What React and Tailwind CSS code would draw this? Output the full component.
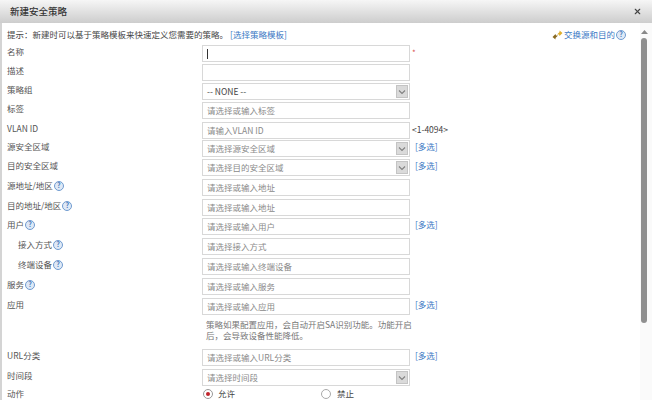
import React from 'react';
import { X } from 'lucide-react';

const rows = [
    { label: '名称', height: 'h-[19px]', required: true, cursor: true },
    { label: '描述', height: 'h-[19px]' },
    { label: '策略组', height: 'h-[19px]', select: true, value: '-- NONE --' },
    { label: '标签', height: 'h-[20px]', placeholder: '请选择或输入标签' },
    { label: 'VLAN ID', height: 'h-[18px]', placeholder: '请输入VLAN ID', range: '<1-4094>' },
    { label: '源安全区域', height: 'h-[19px]', select: true, placeholder: '请选择源安全区域', multi: true },
    { label: '目的安全区域', height: 'h-[20px]', select: true, placeholder: '请选择目的安全区域', multi: true },
    { label: '源地址/地区', height: 'h-[20px]', placeholder: '请选择或输入地址', help: true },
    { label: '目的地址/地区', height: 'h-[19px]', placeholder: '请选择或输入地址', help: true },
    { label: '用户', height: 'h-[20px]', placeholder: '请选择或输入用户', help: true, multi: true },
    { label: '接入方式', height: 'h-[20px]', placeholder: '请选择接入方式', help: true, indent: true },
    { label: '终端设备', height: 'h-[20px]', placeholder: '请选择或输入终端设备', help: true, indent: true },
    { label: '服务', height: 'h-[20px]', placeholder: '请选择或输入服务', help: true },
    { label: '应用', height: 'h-[51px]', placeholder: '请选择或输入应用', multi: true, note: true },
    { label: 'URL分类', height: 'h-[20px]', placeholder: '请选择或输入URL分类', multi: true },
    { label: '时间段', height: 'h-[18px]', select: true, placeholder: '请选择时间段' },
];

const hintText = '提示\uFF1A新建时可以基于策略模板来快速定义您需要的策略。';
const noteText = '策略如果配置应用\uFF0C会自动开启SA识别功能。功能开启后\uFF0C会导致设备性能降低。';

function Help() {
    return (
        <span className="ml-px inline-flex h-[10px] w-[10px] shrink-0 items-center justify-center rounded-full border border-[#6f9bd0] bg-[#dfe9f6] text-[7px] leading-none font-bold text-[#3f76b8]">
            ?
        </span>
    );
}

function Field({ row }) {
    return (
        <div className="flex h-[17px] w-[208px] shrink-0 items-center justify-between border border-[#d8d8d8] pl-[4px] pr-[1px] text-[8.5px] leading-none">
            {row.cursor && <span className="h-[10px] w-px bg-[#333]"></span>}
            {row.value && <span className="text-[#444]">{row.value}</span>}
            {row.placeholder && <span className="text-[#8a8a8a]">{row.placeholder}</span>}
            {row.select && (
                <span className="flex h-[13px] w-[12px] items-center justify-center border border-[#c4c4c4] bg-[#dadada]">
                    <svg width="8" height="6" viewBox="0 0 8 6" fill="none">
                        <path d="M1 1.5 L4 4.5 L7 1.5" stroke="#808080" strokeWidth="1.1" />
                    </svg>
                </span>
            )}
        </div>
    );
}

function Row({ row }) {
    return (
        <div className={`${row.height} flex items-start`}>
            <div className={`flex h-[13px] w-[195px] shrink-0 items-center text-[#555] ${row.indent ? 'pl-[11px]' : ''}`}>
                <span>{row.label}</span>
                {row.help && <Help />}
            </div>
            <div className="w-[208px] shrink-0">
                <Field row={row} />
                {row.note && (
                    <p className="mt-[4px] w-[212px] pl-[4px] text-[8.5px] leading-[11px] text-[#777]">
                        {noteText}
                    </p>
                )}
            </div>
            {row.required && <span className="ml-[2px] text-[8px] leading-[16px] text-[#d9534f]">*</span>}
            {row.range && <span className="ml-[2px] text-[8.5px] leading-[14px] text-[#444]">{row.range}</span>}
            {row.multi && <span className="ml-[5px] text-[8.5px] leading-[12px] text-[#3a78c4]">[多选]</span>}
        </div>
    );
}

export default function App() {
    return (
        <div className="flex h-[400px] w-[652px] flex-col overflow-hidden bg-white font-['Noto_Sans_CJK_SC','Liberation_Sans',sans-serif] text-[8.5px]">
            <div className="flex h-[23px] shrink-0 items-center justify-between bg-gradient-to-b from-[#f6f6f6] to-[#cdcdcd] pl-[10px] pr-[10px]">
                <span className="text-[9.5px] font-medium text-[#333]">新建安全策略</span>
                <X size={9} strokeWidth={3} className="text-[#444]" />
            </div>
            <div className="flex min-h-0 flex-1 border-l-2 border-[#d4d4d4]">
                <div className="min-w-0 flex-1 pl-[5px]">
                    <div className="flex h-[22px] items-center justify-between pr-[14px] pt-[1px]">
                        <div className="text-[#444]">
                            {hintText}
                            <span className="ml-[2px] text-[#3a78c4]">[选择策略模板]</span>
                        </div>
                        <div className="flex items-center text-[#3a78c4]">
                            <svg width="11" height="10" viewBox="0 0 11 10" className="mr-px">
                                <path d="M0.5 7 L3.5 4 L4 5.5 L6 5.5 L3.5 8 L3.5 9.5 Z" fill="#8a6a20" />
                                <path d="M5 4.5 L7.5 2 L7.5 0.5 L10.5 3 L7.5 6 L7 4.5 Z" fill="#e0b030" />
                            </svg>
                            <span>交换源和目的</span>
                            <Help />
                        </div>
                    </div>
                    {rows.map((row) => (
                        <Row key={row.label} row={row} />
                    ))}
                    <div className="flex h-[13px] items-center">
                        <div className="w-[196px] shrink-0 text-[#555]">动作</div>
                        <label className="flex w-[118px] items-center text-[#444]">
                            <span className="mr-[5px] flex h-[10px] w-[10px] items-center justify-center rounded-full border border-[#999]">
                                <span className="h-[4px] w-[4px] rounded-full bg-[#c0242c]"></span>
                            </span>
                            允许
                        </label>
                        <label className="flex items-center text-[#444]">
                            <span className="mr-[6px] h-[10px] w-[10px] rounded-full border border-[#aaa]"></span>
                            禁止
                        </label>
                    </div>
                </div>
                <div className="flex w-[12px] shrink-0 flex-col items-center bg-[#fafafa] pl-px pr-[5px]">
                    <svg width="7" height="4" viewBox="0 0 7 4" className="mt-[7px]">
                        <path d="M0 4 L3.5 0 L7 4 Z" fill="#888" />
                    </svg>
                    <div className="mt-[4px] h-[285px] w-[6px] shrink-0 rounded-full bg-[#8f8f8f]"></div>
                </div>
            </div>
        </div>
    );
}
